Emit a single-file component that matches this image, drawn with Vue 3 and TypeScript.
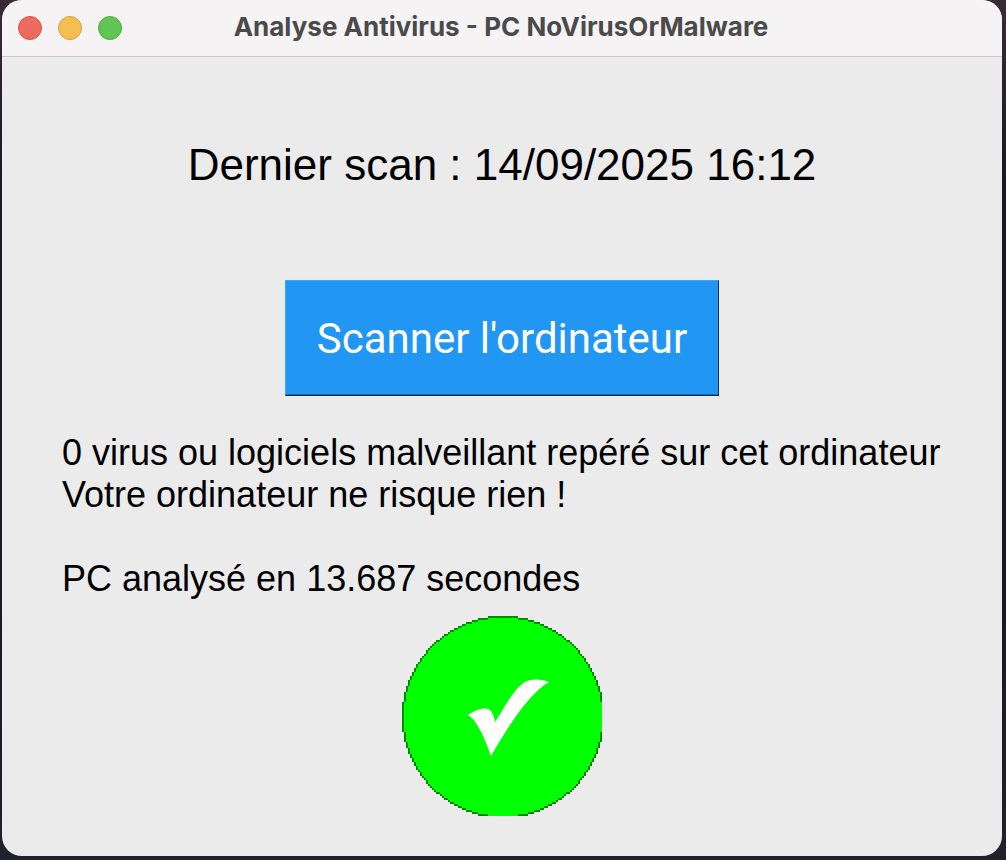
<script setup lang="ts">
import { ref } from 'vue'

const lastScan = ref('14/09/2025 16:12')
const seconds = ref(13.687)

// The badge is drawn on a coarse 100 x 100 grid, with a midpoint circle around cell 50.
const radius = 50
const size = 100
let fill = ''
let outline = ''
for (let y = 0; y < size; y++) {
  const half = Math.round(Math.sqrt(radius * radius - (y - radius) * (y - radius)))
  const start = radius - half
  const end = Math.min(radius + half + 1, size)
  fill += `M${start} ${y}h${end - start}v1H${start}z`
}
for (let d = -radius; d <= radius; d++) {
  const h = Math.round(Math.sqrt(radius * radius - d * d))
  if (Math.abs(d) > h) continue
  for (const [cx, cy] of [[d, h], [d, -h], [h, d], [-h, d]]) {
    const x = cx + radius
    const y = cy + radius
    if (x < size && y < size) outline += `M${x} ${y}h1v1h-1z`
  }
}
</script>

<template>
  <div class="desktop">
    <main class="window">
      <header class="titlebar">
        <div class="controls">
          <button class="dot close" type="button" aria-label="Fermer"></button>
          <button class="dot minimise" type="button" aria-label="Réduire"></button>
          <button class="dot zoom" type="button" aria-label="Agrandir"></button>
        </div>
        <h1 class="title">Analyse Antivirus - PC NoVirusOrMalware</h1>
      </header>
      <section class="content">
        <p class="last-scan">Dernier scan : {{ lastScan }}</p>
        <button class="scan" type="button">Scanner l'ordinateur</button>
        <div class="report">
          <p>0 virus ou logiciels malveillant repéré sur cet ordinateur</p>
          <p>Votre ordinateur ne risque rien !</p>
          <p class="duration">PC analysé en {{ seconds }} secondes</p>
        </div>
        <svg class="badge" viewBox="0 0 100 100" role="img" aria-label="Aucun virus">
          <path :d="fill" fill="#00ff00" shape-rendering="crispEdges" />
          <path :d="outline" fill="#008a00" shape-rendering="crispEdges" />
          <path
            d="M33 49.5C35.5 47.5 39 46.2 41.500 46.200C44.800 46.200 46 49.800 46.500 53C50 48 54.500 38.500 60 34C64 31 69.500 31.500 73.500 33C63.500 39 54.500 53 44.500 70C42 63 38 52.500 33 49.500Z"
            fill="#ffffff"
          />
        </svg>
      </section>
    </main>
  </div>
</template>

<style>
html,
body,
#app {
  height: 100%;
}
body {
  margin: 0;
}
</style>

<style scoped>
.desktop {
  box-sizing: border-box;
  min-height: 100%;
  display: flex;
  padding: 0 4px 4px 2px;
  background: linear-gradient(#3a2c37 0, #1a1726 180px, #1a1726 600px, #20222d 100%);
}
.window {
  flex: 1;
  display: flex;
  flex-direction: column;
  overflow: hidden;
  border-radius: 20px;
  background: #ebebeb;
  color: #000;
  font-family: "Liberation Sans", Arial, sans-serif;
}
.titlebar {
  display: grid;
  grid-template-columns: 1fr auto 1fr;
  align-items: center;
  height: 56px;
  background: #f5f3f4;
  border-bottom: 1px solid #c8c7c8;
}
.controls {
  display: flex;
  gap: 16px;
  padding-left: 16px;
}
.dot {
  width: 24px;
  height: 24px;
  padding: 0;
  border: 1px solid;
  border-radius: 50%;
}
.close {
  background: #ec6a5e;
  border-color: #d1554b;
}
.minimise {
  background: #f4bf4f;
  border-color: #d6a243;
}
.zoom {
  background: #61c554;
  border-color: #52a842;
}
.title {
  margin: 0;
  padding: 0 2px 2px 0;
  color: #4b4a4b;
  font: 700 26px/32px Inter, sans-serif;
}
.content {
  display: flex;
  flex-direction: column;
  align-items: center;
  padding: 80px 60px 40px;
}
p {
  margin: 0;
}
.last-scan {
  font-size: 44px;
  line-height: 56px;
}
.scan {
  margin-top: 87px;
  padding: 30px 31px 28px;
  border: 1px solid;
  border-color: #3ba4fb #06304f #06304f #3ba4fb;
  box-shadow: inset 0 -1px #1769aa;
  background: #2196f3;
  color: #fff;
  font: 400 42px/56px Roboto, sans-serif;
}
.report {
  align-self: stretch;
  margin-top: 36px;
  font-size: 36px;
  line-height: 42px;
}
.duration {
  margin-top: 42px;
}
.badge {
  width: 200px;
  height: 200px;
  margin-top: 16px;
}
</style>
